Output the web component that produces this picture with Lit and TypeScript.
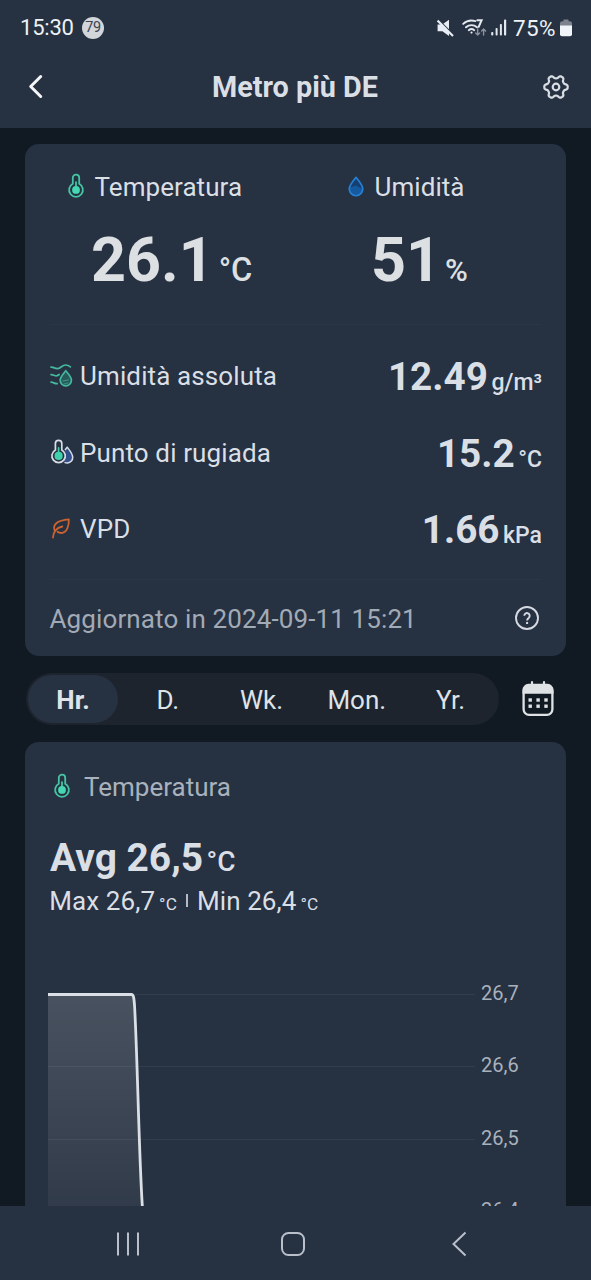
import { LitElement, html, svg, css } from "lit";
import { customElement, state } from "lit/decorators.js";

const thermometer = html`<svg class="thermo" width="20" height="28" viewBox="0 0 20 28" fill="none">
  <path d="M6.800 10.800V4.800a3.200 3.200 0 0 1 6.400 0V10.800a6.900 6.900 0 1 1-6.400 0Z" stroke="#45c4a4" stroke-width="1.800"/>
  <circle cx="10" cy="16.900" r="3.900" fill="#45d8b2"/>
  <path d="M10 9v7" stroke="#45d8b2" stroke-width="1.600" stroke-linecap="round"/>
</svg>`;

const drop = html`<svg width="20" height="28" viewBox="0 0 20 28" fill="none">
  <path d="M10 4.400c3.100 3.700 6.700 7.500 6.700 11.500a6.700 6.700 0 0 1-13.400 0C3.300 11.900 6.900 8.100 10 4.400Z" fill="#143f70"/>
  <path d="M4 14.600l6-2 6.200 3.400a6.200 6.200 0 0 1-12.200.600Z" fill="#17599f"/>
  <path d="M10 4.400c3.100 3.700 6.700 7.500 6.700 11.500a6.700 6.700 0 0 1-13.400 0C3.300 11.900 6.900 8.100 10 4.400Z" stroke="#2580d4" stroke-width="1.800" stroke-linejoin="round"/>
</svg>`;

const absolute = html`<svg width="26" height="26" viewBox="0 0 26 26" fill="none" stroke="#45b79d" stroke-width="1.700" stroke-linecap="round">
  <path d="M2 4.200c3-.3 3.600 1.600 6.600 1.400C12.300 5.300 12.800 2 16.600 2c2.600 0 3.400.700 4.800 1.900"/>
  <path d="M2 11.600c2.500-.2 3.200 1.300 5.400 1.200 1.300-.1 2-.6 2.800-1.300"/>
  <path d="M2 19.200c2.300-.2 3.200 1.600 6.200 1.500"/>
  <path d="M16.800 7.800c2.500 3 5.600 5.900 5.600 9.500a5.600 5.600 0 0 1-11.200 0c0-3.600 3.100-6.500 5.600-9.500Z" fill="#295a5b"/>
  <path d="M14 18.200l5.400-1.400M15 21l4-1" stroke="#37907f" stroke-width="1.200"/>
</svg>`;

const dew = html`<svg width="26" height="28" viewBox="0 0 26 28" fill="none">
  <path d="M16 11l2.200-2.800c2.600 3.300 5.500 6.400 5.500 10.200a5.600 5.600 0 0 1-8.200 4.900" fill="#33508a" stroke="#d7dde6" stroke-width="1.500" stroke-linejoin="round"/>
  <path d="M6.400 11V4.600a3.200 3.200 0 0 1 6.400 0V11a6.700 6.700 0 1 1-6.400 0Z" fill="#263141" stroke="#d7dde6" stroke-width="1.700"/>
  <circle cx="9.600" cy="16.900" r="4.100" fill="#3fd2ab"/>
  <path d="M9.600 8.800v7" stroke="#3fd2ab" stroke-width="1.600" stroke-linecap="round"/>
</svg>`;

const leaf = html`<svg width="26" height="26" viewBox="0 0 26 26" fill="none" stroke="#cc6330" stroke-width="1.800" stroke-linecap="round" stroke-linejoin="round">
  <path d="M5.600 14.500C3.600 9 7.500 4.400 19.800 3.400c.3 6.300-1.600 13.400-7.600 13.600-1.800 0-2.700-.5-3.700-1.200"/>
  <path d="M4 21.600c0-5.600 3.600-10.100 9.300-11.100"/>
</svg>`;

const mute = html`<svg width="18" height="18" viewBox="0 0 18 18">
  <path d="M.6 5.600h4.600L12 .7v16.200L5.400 12.300H.6Z" fill="#e9edf4"/>
  <path d="M.6.2 17 16.600" stroke="#263141" stroke-width="2"/>
  <path d="M.6 1.600 16 16.900" stroke="#e9edf4" stroke-width="2.100"/>
</svg>`;

const wifi = html`<svg width="25" height="20" viewBox="0 0 25 20" fill="none" stroke="#e3e7ee" stroke-width="1.900" stroke-linecap="round">
  <path d="M1.200 5.900C4.500 2.700 9 1.900 13.400 3.100M4 9.300c3.200-2.900 7.800-2.900 11 0M6.800 12.200c1.700-1.400 3.800-1.400 5.400 0"/>
  <circle cx="9.500" cy="14.600" r="1.100" fill="#e3e7ee" stroke="none"/>
  <path d="M15.300 2.200h4.300l-2.900 6.600" stroke-width="2"/>
  <path d="M15.700 11v6m-2-1.900 2 2 2-2M21.600 17v-6m-2 2 2-2 2 2" stroke="#8b93a0" stroke-width="1.400"/>
</svg>`;

const signal = html`<svg width="16" height="18" viewBox="0 0 16 18" fill="#e3e7ee">
  <rect x=".2" y="13" width="2.100" height="3.600" rx=".8"/><rect x="4.600" y="9" width="2" height="7.600" rx=".8"/>
  <rect x="8.900" y="5" width="2" height="11.600" rx=".8"/><rect x="13" y=".5" width="2.200" height="16.100" rx=".8"/>
</svg>`;

const battery = html`<svg width="12" height="18" viewBox="0 0 12 18">
  <path d="M3.500.5h5v1.800H10a2 2 0 0 1 2 2V7H0V4.300a2 2 0 0 1 2-2h1.500Z" fill="#7d848f"/>
  <path d="M0 6.500h12v8.800a2 2 0 0 1-2 2H2a2 2 0 0 1-2-2Z" fill="#f1f4f8"/>
</svg>`;

// Six-lobed outline with flattened tips, lobes pointing left and right.
const gearPath = "M" + Array.from({ length: 120 }, (_, i) => {
  const a = (i * Math.PI) / 60;
  const r = 10.200 + 1.550 * Math.tanh(1.900 * Math.cos(6 * a));
  return `${(13 + r * Math.cos(a)).toFixed(2)} ${(13 + r * Math.sin(a)).toFixed(2)}`;
}).join("L") + "Z";

const gear = html`<svg width="26" height="26" viewBox="0 0 26 26" fill="none" stroke="#d9dee5" stroke-width="2.200" stroke-linejoin="round">
  <path d=${gearPath}/>
  <circle cx="13" cy="13" r="3.300"/>
</svg>`;

const help = html`<svg width="26" height="26" viewBox="0 0 26 26" fill="none" stroke="#d5dae2">
  <circle cx="13" cy="12" r="11" stroke-width="1.900"/>
  <path d="M10.300 9.800a2.700 2.700 0 1 1 4.500 2c-1.100.9-1.700 1.300-1.700 2.800" stroke-width="1.900"/>
  <path d="M13.100 15.900v2.100" stroke-width="2"/>
</svg>`;

const calendar = html`<svg width="32" height="36" viewBox="0 0 32 36">
  <rect x="1.600" y="4.500" width="28.800" height="29.300" rx="5.500" fill="none" stroke="#dfe2e4" stroke-width="2.300"/>
  <path d="M.5 12.800V9a6 6 0 0 1 6-6.200h19a6 6 0 0 1 6 6.200v3.800Z" fill="#dfe2e4"/>
  <path d="M10 1.200v4M22 1.200v4" stroke="#dfe2e4" stroke-width="2.200" stroke-linecap="round"/>
  <g fill="#dfe2e4">${[6.500, 14.400, 22.300].map((x) => [17.300, 23.500].map((y) => svg`<rect x=${x} y=${y} width="3.400" height="3.400"/>`))}</g>
</svg>`;

@customElement("app-root")
export class AppRoot extends LitElement {
  @state() private tab = "Hr.";

  static styles = css`
    :host { display: flex; flex-direction: column; width: 100%; height: 1280px; overflow: hidden;
      background: #111923; color: #dadfe6; font-family: Roboto, "Liberation Sans", sans-serif; font-size: 26px; }
    * { box-sizing: border-box; }
    svg { display: block; flex: none; }
    .top { flex: none; height: 128px; background: #263141; }
    .status { display: flex; align-items: center; height: 55px; padding: 0 19px 0 20px; font-size: 22px; color: #eef1f6; }
    .time { width: 62px; letter-spacing: -0.200px; }
    .count { width: 22px; height: 22px; border-radius: 50%; background: #d2d5da; color: #3c4350; font-size: 14.500px;
      line-height: 22px; text-align: center; letter-spacing: -0.500px; }
    .sys { display: flex; align-items: center; margin-left: auto; }
    .sys .wifi { margin-left: 7px; }
    .sys .sig { margin-left: 4px; }
    .sys .pct { margin: 0 4px 0 6px; font-size: 22.500px; letter-spacing: 0.400px; }
    .bar { display: grid; grid-template-columns: 60px 1fr 60px; align-items: center; height: 63px; padding: 0 22px 0 25px; }
    .title { text-align: center; font-weight: 700; font-size: 28.800px; margin-left: -4px; }
    .bar .gear { justify-self: end; }
    .body { flex: 1; min-height: 0; overflow: hidden; padding: 16px 25px 0; }
    .card { background: #263141; border-radius: 14px; padding: 0 25px; }
    .now { height: 512px; }
    .heads { display: grid; grid-template-columns: 280px 1fr; height: 180px; margin-left: 16px; }
    .head { display: flex; align-items: center; gap: 8.500px; height: 86px; letter-spacing: 0.060px; }
    .big { display: flex; align-items: baseline; height: 60px; line-height: 60px; padding-left: 25px; font-size: 61px; font-weight: 700; color: #dde0e3; }
    .big span { font-size: 32.500px; font-weight: 500; margin-left: 5px; }
    .big .pc { font-size: 31px; margin-left: 4px; }
    .rows { border: solid #2b3645; border-width: 1px 0; height: 256px; padding-top: 13px; }
    .row { display: flex; align-items: center; height: 76.500px; letter-spacing: 0.120px; }
    .row .ic { width: 31px; margin-left: -1px; }
    .row .name { margin-top: -0.500px; }
    .val { display: flex; align-items: baseline; margin: 1px -1px 0 auto; font-size: 38.700px; font-weight: 700; letter-spacing: 0; }
    .val span { font-size: 23px; font-weight: 500; margin-left: 3.500px; }
    .foot { display: flex; align-items: center; justify-content: space-between; height: 77px; margin: 0 1px 0 -0.500px;
      letter-spacing: 0.120px; color: #a2aab6; }
    .filter { display: flex; align-items: center; height: 52px; margin: 17px 0; padding-left: 1px; padding-right: 12px; justify-content: space-between; }
    .tabs { display: grid; grid-template-columns: repeat(5, 1fr); width: 473px; height: 52px; padding: 2px; border-radius: 26px; background: #1d242e; }
    .tab { all: unset; display: grid; place-items: center; box-sizing: border-box; height: 48px; padding: 1px 2px 0 0; border-radius: 24px; color: #dfe3e8; }
    .tab:nth-child(n + 4) { padding: 1px 0 0 1px; }
    .tab.on { background: #263141; font-weight: 700; width: 90px; padding-right: 0; }
    .hist { height: 700px; }
    .hh { display: flex; align-items: center; gap: 12px; height: 89px; padding-left: 2px; color: #a9b1bc; }
    .avg { display: flex; align-items: baseline; height: 52px; line-height: 53px; font-size: 38.900px; font-weight: 700; }
    .avg span { font-size: 28px; font-weight: 500; margin-left: 3.500px; }
    .mm { display: flex; align-items: baseline; height: 36px; line-height: 36px; margin-left: -0.700px; letter-spacing: 0.080px; }
    .mm span { font-size: 17.300px; margin-left: 4px; }
    .mm i { width: 1.500px; height: 13px; background: #b4bbc6; margin: 0 9px 2px 9.500px; align-self: center; }
    .chart { display: grid; grid-template-columns: 433px 1fr; margin: 62px 0 0 -2px; }
    .axis { font-size: 20px; line-height: 24px; color: #a9b1bc; }
    .axis div { height: 72.400px; }
    .nav { flex: none; height: 74px; background: #263141; }
  `;

  render() {
    const row = (icon: unknown, name: string, v: string, u: string) => html`
      <div class="row"><div class="ic">${icon}</div><div class="name">${name}</div><div class="val">${v}<span>${u}</span></div></div>`;
    return html`
      <header class="top">
        <div class="status">
          <div class="time">15:30</div><div class="count">79</div>
          <div class="sys">${mute}<div class="wifi">${wifi}</div><div class="sig">${signal}</div><div class="pct">75%</div>${battery}</div>
        </div>
        <div class="bar">
          <svg width="24" height="26" viewBox="0 0 24 26" fill="none" stroke="#f4f6f8" stroke-width="3" stroke-linecap="round" stroke-linejoin="round"><path d="M15.700 2.500 5.700 12.500l10 10"/></svg>
          <div class="title">Metro più DE</div>
          <div class="gear">${gear}</div>
        </div>
      </header>
      <main class="body">
        <section class="card now">
          <div class="heads">
            <div><div class="head">${thermometer}Temperatura</div><div class="big">26.1<span>°C</span></div></div>
            <div><div class="head">${drop}Umidità</div><div class="big">51<span class="pc">%</span></div></div>
          </div>
          <div class="rows">
            ${row(absolute, "Umidità assoluta", "12.49", "g/m³")}
            ${row(dew, "Punto di rugiada", "15.2", "°C")}
            ${row(leaf, "VPD", "1.66", "kPa")}
          </div>
          <div class="foot"><div>Aggiornato in 2024-09-11 15:21</div>${help}</div>
        </section>
        <div class="filter">
          <div class="tabs">
            ${["Hr.", "D.", "Wk.", "Mon.", "Yr."].map((t) => html`
              <button class="tab ${t === this.tab ? "on" : ""}" @click=${() => (this.tab = t)}>${t}</button>`)}
          </div>
          ${calendar}
        </div>
        <section class="card hist">
          <div class="hh">${thermometer}Temperatura</div>
          <div class="avg">Avg 26,5<span>°C</span></div>
          <div class="mm">Max 26,7<span>°C</span><i></i>Min 26,4<span>°C</span></div>
          <div class="chart">
            <svg width="427" height="300" viewBox="0 0 427 300" fill="none">
              <defs><linearGradient id="fade" x1="0" y1="13" x2="0" y2="300" gradientUnits="userSpaceOnUse">
                <stop stop-color="#fff" stop-opacity=".16"/><stop offset="1" stop-color="#fff" stop-opacity=".01"/>
              </linearGradient></defs>
              ${[13.500, 85.500, 158.500, 231].map((y) => svg`<path d="M0 ${y}H427" stroke="#323d4c"/>`)}
              <path d="M0 13.500H84.500C88.500 50 89 190 96.500 260V300H0Z" fill="url(#fade)"/>
              <path d="M0 13.500H83.500C85.500 13.500 86 17 86.500 24C89.500 75 91 180 94.600 229L98 300" stroke="#dbe0e7" stroke-width="2.800"/>
            </svg>
            <div class="axis">${["26,7", "26,6", "26,5", "26,4"].map((l) => html`<div>${l}</div>`)}</div>
          </div>
        </section>
      </main>
      <nav class="nav">
        <svg width="591" height="74" viewBox="0 0 591 74" fill="none" stroke="#b9c0ca" stroke-width="2">
          <path d="M118 26.500v23M128 26.500v23M138 26.500v23"/>
          <rect x="282" y="27" width="22" height="22" rx="6.500"/>
          <path d="M465.500 26.500 453.500 38l12 11.500"/>
        </svg>
      </nav>`;
  }
}
